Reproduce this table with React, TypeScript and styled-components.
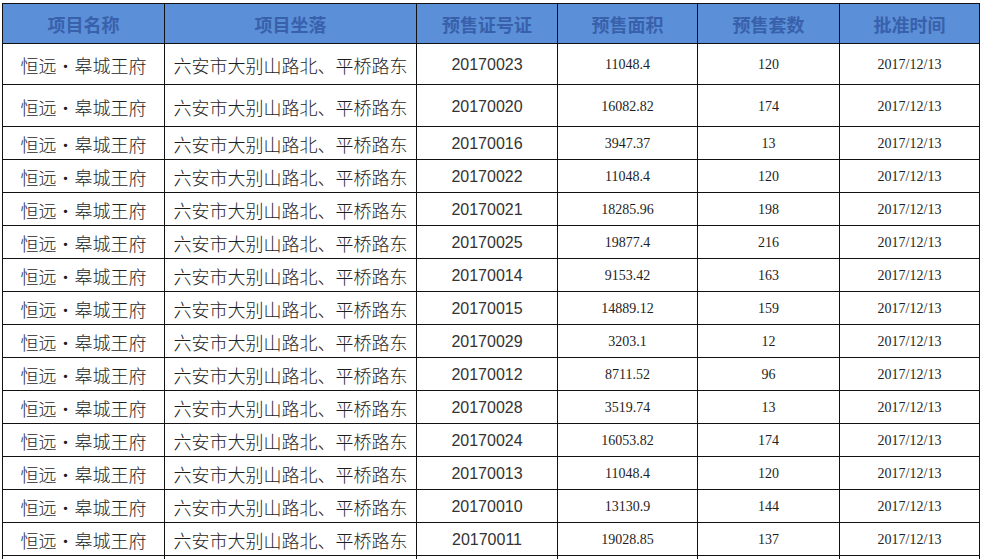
import styled, { createGlobalStyle } from 'styled-components';

const GlobalStyle = createGlobalStyle`
  html, body {
    margin: 0;
    padding: 0;
    background: #ffffff;
    overflow: hidden;
  }
  body {
    font-family: "Noto Sans CJK SC", "Noto Sans", sans-serif;
  }
`;

const Page = styled.div`
  padding: 3px 0 0 2px;
`;

const Sheet = styled.div`
  width: 978px;
  border-top: 1px solid #111;
  border-left: 1px solid #111;
  box-sizing: border-box;
`;

const Row = styled.div<{ $h: number }>`
  display: grid;
  grid-template-columns: 162px 252px 141px 140px 142px 140px;
  height: ${(p) => p.$h}px;
`;

const HeadCell = styled.div`
  display: flex;
  align-items: center;
  justify-content: center;
  background: #5b8fd8;
  color: #3961ab;
  font-family: "Noto Sans CJK SC", sans-serif;
  font-weight: 700;
  font-size: 18px;
  border-right: 1px solid #111;
  border-bottom: 1px solid #111;
  box-sizing: border-box;
`;

type Kind = 'cjk' | 'code' | 'num';

const Cell = styled.div<{ $kind: Kind }>`
  display: flex;
  align-items: center;
  justify-content: center;
  padding-top: 2px;
  border-right: 1px solid #111;
  border-bottom: 1px solid #111;
  box-sizing: border-box;
  white-space: nowrap;
  color: ${(p) => (p.$kind === 'code' ? '#333' : '#1e1e1e')};
  font-family: ${(p) =>
    p.$kind === 'cjk'
      ? '"Noto Sans CJK SC", sans-serif'
      : p.$kind === 'code'
      ? '"Liberation Sans", Arial, sans-serif'
      : '"Liberation Serif", "Times New Roman", serif'};
  font-size: ${(p) => (p.$kind === 'cjk' ? '18px' : p.$kind === 'code' ? '16px' : '14px')};
  font-weight: ${(p) => (p.$kind === 'cjk' ? 300 : 400)};
`;

const headers = ['项目名称', '项目坐落', '预售证号证', '预售面积', '预售套数', '批准时间'];

const rows: [string, string, string][] = [
  ['20170023', '11048.4', '120'],
  ['20170020', '16082.82', '174'],
  ['20170016', '3947.37', '13'],
  ['20170022', '11048.4', '120'],
  ['20170021', '18285.96', '198'],
  ['20170025', '19877.4', '216'],
  ['20170014', '9153.42', '163'],
  ['20170015', '14889.12', '159'],
  ['20170029', '3203.1', '12'],
  ['20170012', '8711.52', '96'],
  ['20170028', '3519.74', '13'],
  ['20170024', '16053.82', '174'],
  ['20170013', '11048.4', '120'],
  ['20170010', '13130.9', '144'],
  ['20170011', '19028.85', '137'],
];

const heightFor = (i: number) => (i === 0 ? 41 : i === 1 ? 42 : 33);

export default function App() {
  return (
    <Page>
      <GlobalStyle />
      <Sheet>
        <Row $h={40}>
          {headers.map((h) => (
            <HeadCell key={h}>{h}</HeadCell>
          ))}
        </Row>
        {rows.map(([code, area, units], i) => (
          <Row $h={heightFor(i)} key={i}>
            <Cell $kind="cjk">恒远·皋城王府</Cell>
            <Cell $kind="cjk">六安市大别山路北、平桥路东</Cell>
            <Cell $kind="code">{code}</Cell>
            <Cell $kind="num">{area}</Cell>
            <Cell $kind="num">{units}</Cell>
            <Cell $kind="num">2017/12/13</Cell>
          </Row>
        ))}
        {/* next row starts at the bottom edge of the view */}
        <Row $h={33}>
          {headers.map((h) => (
            <Cell $kind="num" key={h} />
          ))}
        </Row>
      </Sheet>
    </Page>
  );
}
